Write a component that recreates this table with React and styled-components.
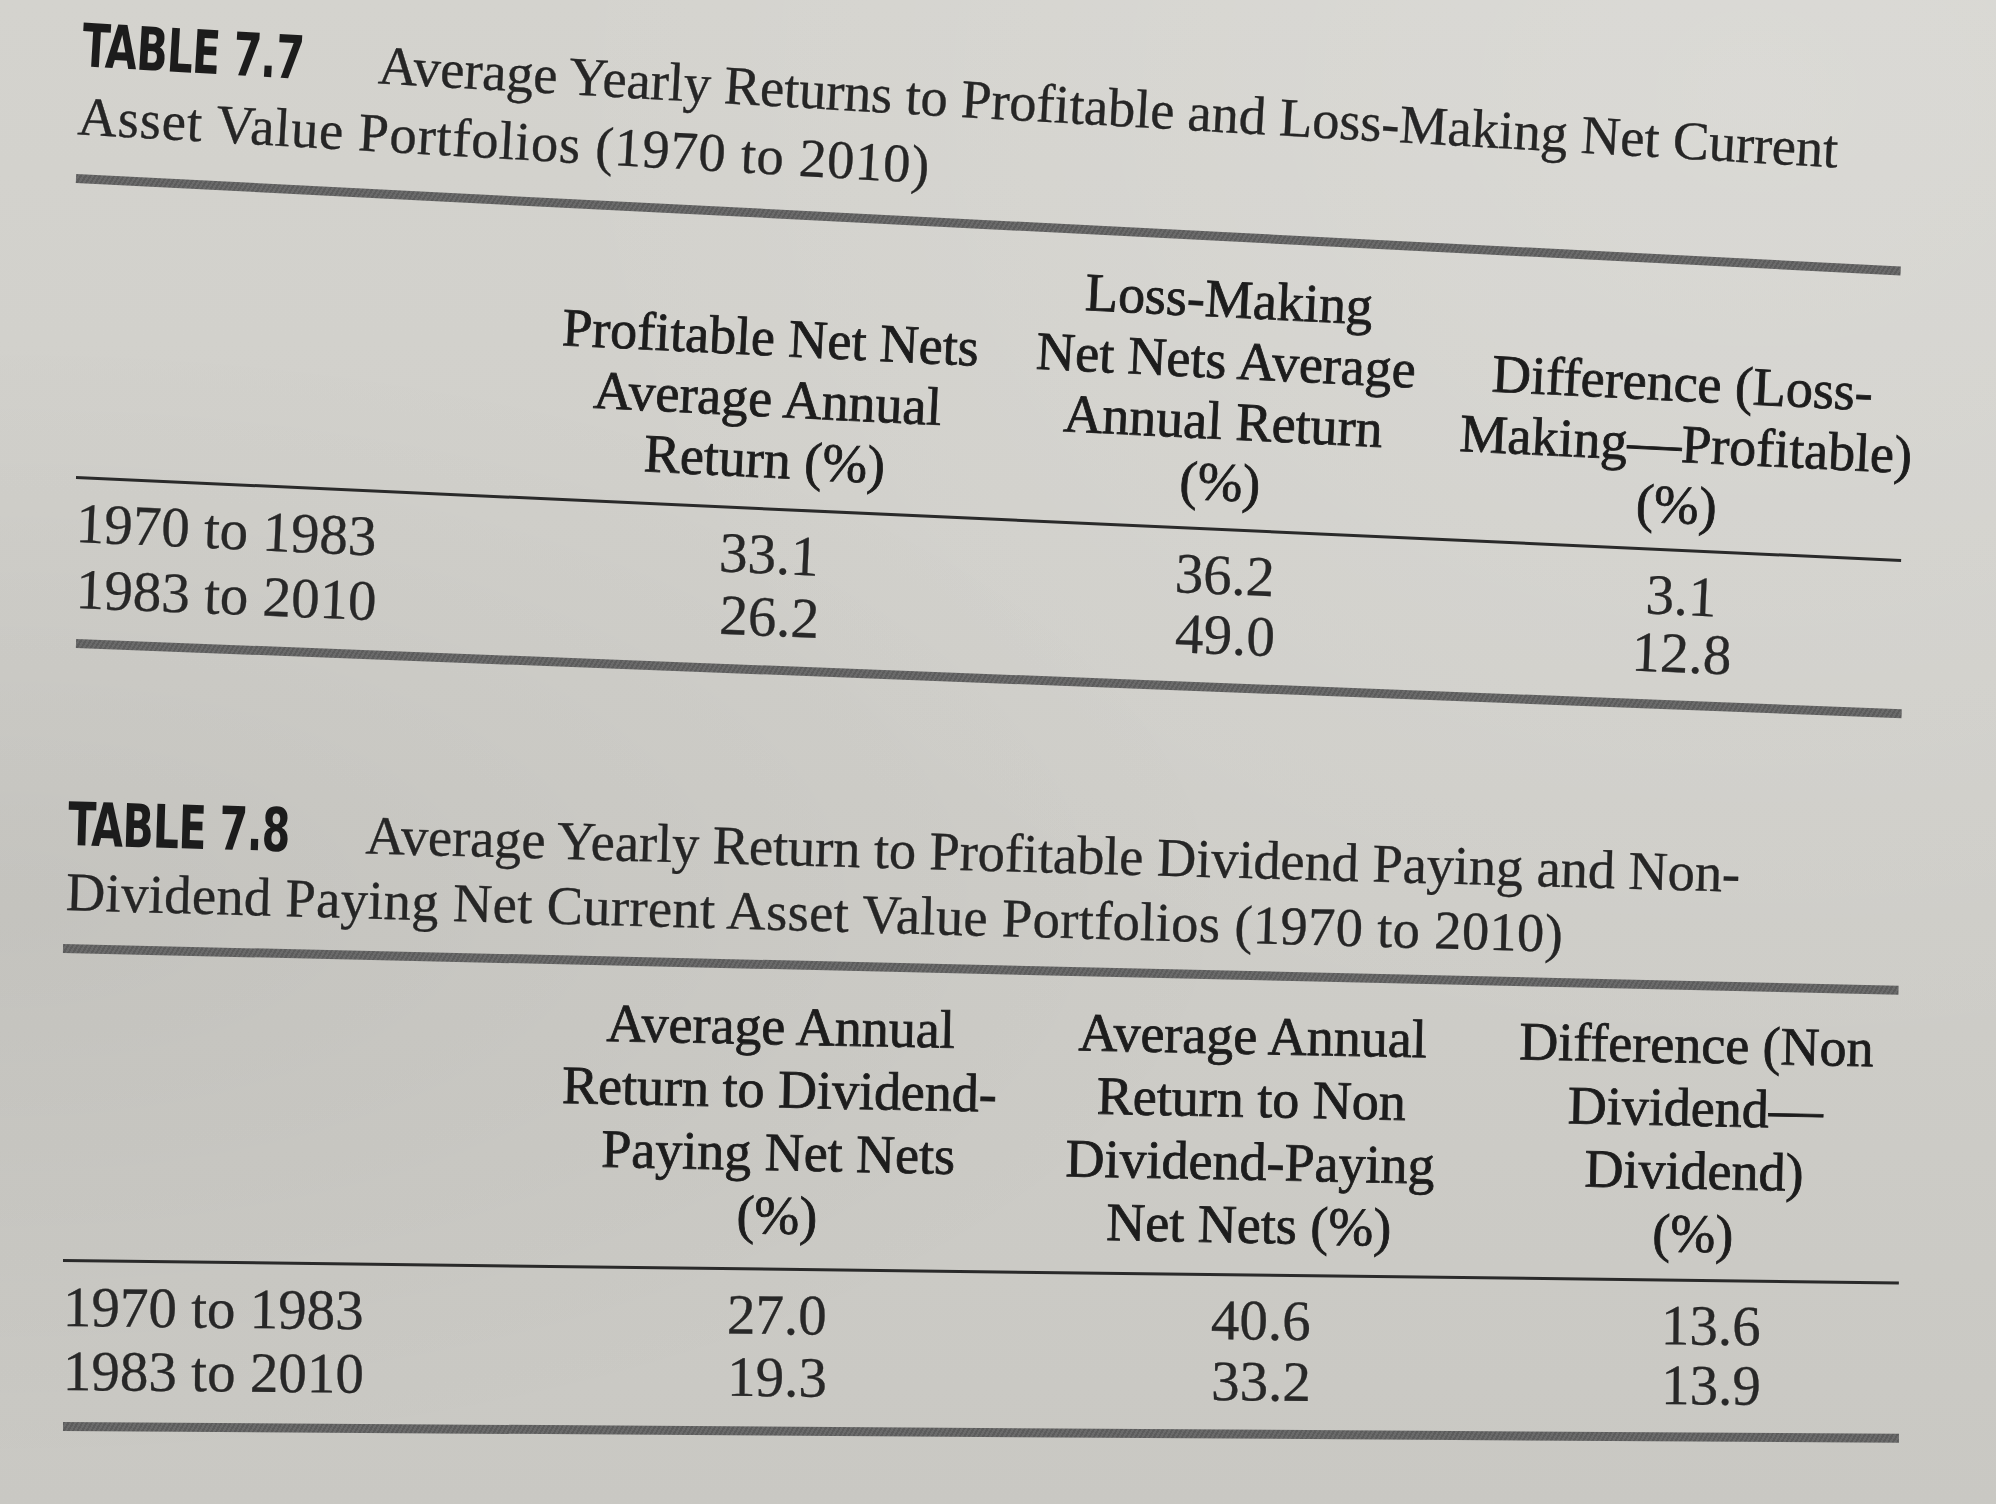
import React from "react";
import styled, { createGlobalStyle, css } from "styled-components";

const Global = createGlobalStyle`
  html, body { margin: 0; padding: 0; }
  body { width: 1996px; height: 1504px; overflow: hidden; background: #cfcec9; }
`;

const tilt = css`
  transform-origin: 0 50%;
  transform: rotate(${(p) => p.$tilt}deg);
`;

const Page = styled.main`
  width: 1996px;
  height: 1504px;
  box-sizing: border-box;
  padding-top: 14px;
  overflow: hidden;
  color: #252525;
  font-family: "Liberation Serif", "Times New Roman", serif;
  background:
    radial-gradient(ellipse at 88% 6%, rgba(255, 255, 255, 0.16), transparent 50%),
    radial-gradient(ellipse at 0% 60%, rgba(0, 0, 0, 0.05), transparent 45%),
    linear-gradient(180deg, #d4d3ce 0%, #d0cfca 45%, #c9c8c3 100%);
`;

const TableBlock = styled.section`
  display: flex;
  flex-direction: column;
  width: ${(p) => p.$width}px;
  margin-left: ${(p) => p.$left}px;
  margin-top: ${(p) => p.$top}px;
`;

const Caption = styled.p`
  margin: 0;
  padding-left: 4px;
  font-size: 54.5px;
  line-height: ${(p) => p.$lh}px;
  white-space: nowrap;
  color: #262626;
  -webkit-text-stroke: 0.35px #262626;
  ${tilt}
`;

const CaptionLine = styled.span`
  letter-spacing: ${(p) => p.$ls || 0}px;
`;

const CaptionLabel = styled.span`
  display: inline-block;
  width: ${(p) => p.$w}px;
  margin-right: ${(p) => p.$gap}px;
  font-family: "DejaVu Sans Condensed", "DejaVu Sans", sans-serif;
  font-weight: 700;
  font-size: 60px;
  line-height: 1;
  letter-spacing: -1px;
  color: #1c1c1c;
  -webkit-text-stroke: 0;
  transform: scaleX(0.76);
  transform-origin: 0 50%;
`;

const Rule = styled.div`
  height: ${(p) => (p.$thick ? 9 : 3)}px;
  margin-top: ${(p) => p.$mt}px;
  background: ${(p) =>
    p.$thick
      ? "repeating-linear-gradient(120deg, #5c5c5c 0 2px, #6a6a6a 2px 4px)"
      : "#2a2a2a"};
  ${tilt}
`;

const HeaderRow = styled.div`
  display: grid;
  grid-template-columns: ${(p) => p.$cols};
  align-items: end;
  margin-top: ${(p) => p.$mt}px;
  font-size: 54px;
  line-height: ${(p) => p.$lh}px;
  color: #1d1d1d;
  -webkit-text-stroke: 0.8px #1d1d1d;
  ${tilt}
`;

const HeadCell = styled.div`
  text-align: center;
  white-space: nowrap;
`;

const DataRow = styled.div`
  display: grid;
  grid-template-columns: ${(p) => p.$cols};
  align-items: center;
  height: ${(p) => p.$h}px;
  margin-top: ${(p) => p.$mt || 0}px;
  font-size: 57px;
  line-height: ${(p) => p.$h}px;
  color: #282828;
  -webkit-text-stroke: 0.3px #282828;
  ${tilt}
`;

const RowLabel = styled.div`
  text-align: left;
  white-space: nowrap;
`;

const Value = styled.div`
  text-align: center;
  white-space: nowrap;
`;

const Lines = ({ lines }) =>
  lines.map((l, i) => (
    <React.Fragment key={i}>
      {i > 0 && <br />}
      {l}
    </React.Fragment>
  ));

const tables = [
  {
    left: 76,
    top: 0,
    width: 1827,
    label: "TABLE 7.7",
    labelW: 229,
    gap: 68,
    capLh: 68,
    cap: [
      "Average Yearly Returns to Profitable and Loss-Making Net Current",
      "Asset Value Portfolios (1970 to 2010)",
    ],
    capLs: [-0.15, 0.8],
    capTilt: 3.3,
    topRule: { mt: 23.5, tilt: 2.9 },
    head: {
      mt: 29,
      lh: 61,
      tilt: 2.85,
      cols: "475px 438px 474px 440px",
      cells: [
        ["Profitable Net Nets", "Average Annual", "Return (%)"],
        ["Loss-Making", "Net Nets Average", "Annual Return", "(%)"],
        ["Difference (Loss-", "Making\u2014Profitable)", "(%)"],
      ],
    },
    thin: { mt: 20, tilt: 2.6 },
    rowH: 66,
    rowMt: 11.5,
    dataCols: "475px 438px 474px 440px",
    rows: [
      { label: "1970 to 1983", vals: ["33.1", "36.2", "3.1"], tilt: 2.6 },
      { label: "1983 to 2010", vals: ["26.2", "49.0", "12.8"], tilt: 2.3 },
    ],
    bottom: { mt: 16.5, tilt: 2.2 },
  },
  {
    left: 63,
    top: 146,
    width: 1836,
    label: "TABLE 7.8",
    labelW: 226,
    gap: 72,
    capLh: 65,
    cap: [
      "Average Yearly Return to Profitable Dividend Paying and Non-",
      "Dividend Paying Net Current Asset Value Portfolios (1970 to 2010)",
    ],
    capLs: [-0.1, 0.35],
    capTilt: 1.6,
    topRule: { mt: 20, tilt: 1.3 },
    head: {
      mt: 28,
      lh: 63,
      tilt: 1.15,
      cols: "484px 464px 480px 408px",
      cells: [
        ["Average Annual", "Return to Dividend-", "Paying Net Nets", "(%)"],
        ["Average Annual", "Return to Non", "Dividend-Paying", "Net Nets (%)"],
        ["Difference (Non", "Dividend\u2014", "Dividend)", "(%)"],
      ],
    },
    thin: { mt: 26, tilt: 0.7 },
    rowH: 64,
    rowMt: 13.5,
    dataCols: "492px 444px 524px 376px",
    rows: [
      { label: "1970 to 1983", vals: ["27.0", "40.6", "13.6"], tilt: 0.65 },
      { label: "1983 to 2010", vals: ["19.3", "33.2", "13.9"], tilt: 0.5 },
    ],
    bottom: { mt: 18.5, tilt: 0.37 },
  },
];

export default function App() {
  return (
    <>
      <Global />
      <Page>
        {tables.map((t) => (
          <TableBlock key={t.label} $left={t.left} $top={t.top} $width={t.width}>
            <Caption $lh={t.capLh} $tilt={t.capTilt}>
              <CaptionLabel $w={t.labelW} $gap={t.gap}>
                {t.label}
              </CaptionLabel>
              <CaptionLine $ls={t.capLs[0]}>{t.cap[0]}</CaptionLine>
              <br />
              <CaptionLine $ls={t.capLs[1]}>{t.cap[1]}</CaptionLine>
            </Caption>
            <Rule $thick $mt={t.topRule.mt} $tilt={t.topRule.tilt} />
            <HeaderRow
              $cols={t.head.cols}
              $mt={t.head.mt}
              $lh={t.head.lh}
              $tilt={t.head.tilt}
            >
              <HeadCell />
              {t.head.cells.map((c, i) => (
                <HeadCell key={i}>
                  <Lines lines={c} />
                </HeadCell>
              ))}
            </HeaderRow>
            <Rule $mt={t.thin.mt} $tilt={t.thin.tilt} />
            {t.rows.map((r, i) => (
              <DataRow
                key={r.label}
                $cols={t.dataCols}
                $h={t.rowH}
                $mt={i === 0 ? t.rowMt : 0}
                $tilt={r.tilt}
              >
                <RowLabel>{r.label}</RowLabel>
                {r.vals.map((v, j) => (
                  <Value key={j}>{v}</Value>
                ))}
              </DataRow>
            ))}
            <Rule $thick $mt={t.bottom.mt} $tilt={t.bottom.tilt} />
          </TableBlock>
        ))}
      </Page>
    </>
  );
}
